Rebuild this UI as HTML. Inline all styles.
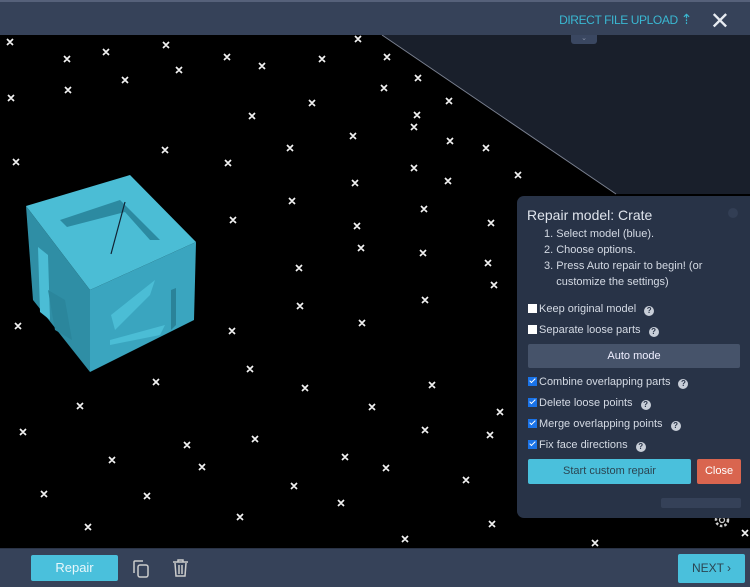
<!DOCTYPE html>
<html><head><meta charset="utf-8"><style>
*{margin:0;padding:0;box-sizing:border-box}
body{width:750px;height:587px;overflow:hidden;background:#000;font-family:"Liberation Sans",sans-serif;position:relative}
.hdr{position:absolute;left:0;top:0;width:750px;height:35px;background:#364259;border-top:2px solid #56617a}
.up{position:absolute;right:58px;top:9px;color:#3ab8d2;font-size:12px;letter-spacing:-0.4px}
.x{position:absolute;right:20px;top:5px;color:#e8ecf2;font-size:24px;font-weight:300}
.tab{position:absolute;left:571px;top:35px;width:26px;height:9px;background:#3a4761;border-radius:0 0 3px 3px;color:#8893a8;font-size:7px;text-align:center;line-height:7px}
.bot{position:absolute;left:0;top:548px;width:750px;height:39px;background:#364259;border-top:1px solid #2a3346}
.btn{position:absolute;background:#4ac0dc;color:#e8f7fb;font-size:13px;text-align:center;border-radius:2px}
.panel{position:absolute;left:517px;top:196px;width:240px;height:322px;background:#283347;border-radius:7px;color:#d4dae4;font-size:11px}
.panel h3{position:absolute;left:10px;top:11px;font-size:14px;font-weight:normal;color:#dfe4ec}
.ol{position:absolute;left:27px;top:30px;line-height:16px}
.cb{position:absolute;left:11px;font-size:11px}
.cb i{display:inline-block;width:9px;height:9px;background:#fff;margin-right:2px;vertical-align:-1px;position:relative}
.cb i.c{background:#1a73e8}
.cb i.c:after{content:"";position:absolute;left:2.5px;top:0px;width:2px;height:5px;border:solid #fff;border-width:0 1.5px 1.5px 0;transform:rotate(45deg)}
.q{display:inline-block;width:10px;height:10px;border-radius:50%;background:#c8ced8;color:#283347;font-size:8px;text-align:center;line-height:10px;font-weight:bold;margin-left:8px;vertical-align:-1px}
</style></head><body>
<svg width="750" height="587" style="position:absolute;left:0;top:0">
<polygon points="382,35 750,35 750,194 616,194" fill="#191f2b"/>
<line x1="382" y1="35" x2="616" y2="194" stroke="#7a8090" stroke-width="1"/>
<path stroke="#f2f2f2" stroke-width="1.7" d="
M7,39l6,6m0,-6l-6,6 M64,56l6,6m0,-6l-6,6 M103,49l6,6m0,-6l-6,6 M163,42l6,6m0,-6l-6,6 M224,54l6,6m0,-6l-6,6 M259,63l6,6m0,-6l-6,6 M319,56l6,6m0,-6l-6,6 M355,36l6,6m0,-6l-6,6 M384,54l6,6m0,-6l-6,6
M8,95l6,6m0,-6l-6,6 M65,87l6,6m0,-6l-6,6 M122,77l6,6m0,-6l-6,6 M176,67l6,6m0,-6l-6,6 M249,113l6,6m0,-6l-6,6 M309,100l6,6m0,-6l-6,6 M381,85l6,6m0,-6l-6,6 M415,75l6,6m0,-6l-6,6 M414,112l6,6m0,-6l-6,6 M446,98l6,6m0,-6l-6,6
M13,159l6,6m0,-6l-6,6 M162,147l6,6m0,-6l-6,6 M225,160l6,6m0,-6l-6,6 M287,145l6,6m0,-6l-6,6 M350,133l6,6m0,-6l-6,6 M411,124l6,6m0,-6l-6,6 M447,138l6,6m0,-6l-6,6 M483,145l6,6m0,-6l-6,6 M411,165l6,6m0,-6l-6,6 M445,178l6,6m0,-6l-6,6 M515,172l6,6m0,-6l-6,6
M352,180l6,6m0,-6l-6,6 M289,198l6,6m0,-6l-6,6 M230,217l6,6m0,-6l-6,6 M421,206l6,6m0,-6l-6,6 M354,223l6,6m0,-6l-6,6 M485,260l6,6m0,-6l-6,6 M488,220l6,6m0,-6l-6,6 M15,323l6,6m0,-6l-6,6 M229,328l6,6m0,-6l-6,6 M297,303l6,6m0,-6l-6,6 M359,320l6,6m0,-6l-6,6 M422,297l6,6m0,-6l-6,6 M491,282l6,6m0,-6l-6,6 M296,265l6,6m0,-6l-6,6 M420,250l6,6m0,-6l-6,6 M358,245l6,6m0,-6l-6,6
M77,403l6,6m0,-6l-6,6 M153,379l6,6m0,-6l-6,6 M247,366l6,6m0,-6l-6,6 M302,385l6,6m0,-6l-6,6 M369,404l6,6m0,-6l-6,6 M429,382l6,6m0,-6l-6,6 M497,409l6,6m0,-6l-6,6 M20,429l6,6m0,-6l-6,6 M109,457l6,6m0,-6l-6,6 M184,442l6,6m0,-6l-6,6 M252,436l6,6m0,-6l-6,6 M342,454l6,6m0,-6l-6,6 M422,427l6,6m0,-6l-6,6 M487,432l6,6m0,-6l-6,6 M41,491l6,6m0,-6l-6,6 M144,493l6,6m0,-6l-6,6 M199,464l6,6m0,-6l-6,6 M291,483l6,6m0,-6l-6,6 M383,465l6,6m0,-6l-6,6 M463,477l6,6m0,-6l-6,6 M85,524l6,6m0,-6l-6,6 M237,514l6,6m0,-6l-6,6 M338,500l6,6m0,-6l-6,6 M402,536l6,6m0,-6l-6,6 M489,521l6,6m0,-6l-6,6 M592,540l6,6m0,-6l-6,6 M742,530l6,6m0,-6l-6,6"/>
<!-- cube -->
<polygon points="26,206 130,175 196,242 90,290" fill="#4bbdd5"/>
<polygon points="26,206 90,290 90,372 33,300" fill="#2f8ea5"/>
<polygon points="90,290 196,242 194,320 90,372" fill="#3aa5bf"/>
<polygon points="60,220 120,200 160,240 150,240 125,212 67,227" fill="#2c8aa1"/>
<line x1="125" y1="202" x2="111" y2="254" stroke="#123" stroke-width="1.2"/>
<polygon points="38,247 48,255 50,320 40,312" fill="#4bbdd5"/>
<polygon points="48,290 65,300 72,340 55,330" fill="#2b869c"/>
<polygon points="111,315 155,280 150,295 115,330" fill="#4bbdd5"/>
<polygon points="110,340 165,325 160,335 110,345" fill="#4bbdd5"/>
<polygon points="171,290 176,288 176,325 171,330" fill="#2a8399"/>
<!-- gear -->
<circle cx="722" cy="520" r="6" fill="none" stroke="#ccc" stroke-width="2.5" stroke-dasharray="2.5 2"/>
<circle cx="722" cy="520" r="2.5" fill="none" stroke="#ccc" stroke-width="1.3"/>
</svg>
<div class="hdr"><div class="up">DIRECT FILE UPLOAD <span style="font-size:14px">⇡</span></div><div class="x">✕</div></div>
<div class="tab">⌄</div>
<div class="panel">
<div style="position:absolute;right:19px;top:12px;width:10px;height:10px;border-radius:50%;background:#323e54"></div>
<h3>Repair model: Crate</h3>
<div class="ol">1. Select model (blue).<br>2. Choose options.<br>3. Press Auto repair to begin! (or<br>&nbsp;&nbsp;&nbsp;&nbsp;customize the settings)</div>
<div class="cb" style="top:107px"><i></i>Keep original model<span class="q">?</span></div>
<div class="cb" style="top:128px"><i></i>Separate loose parts<span class="q">?</span></div>
<div style="position:absolute;left:11px;top:148px;width:212px;height:24px;background:#46536a;color:#eef;font-size:11px;text-align:center;line-height:24px;border-radius:2px">Auto mode</div>
<div class="cb" style="top:180px"><i class="c"></i>Combine overlapping parts<span class="q">?</span></div>
<div class="cb" style="top:201px"><i class="c"></i>Delete loose points<span class="q">?</span></div>
<div class="cb" style="top:222px"><i class="c"></i>Merge overlapping points<span class="q">?</span></div>
<div class="cb" style="top:243px"><i class="c"></i>Fix face directions<span class="q">?</span></div>
<div style="position:absolute;left:11px;top:263px;width:163px;height:25px;background:#4ac0dc;color:#2b4552;font-size:11px;text-align:center;line-height:25px;border-radius:2px">Start custom repair</div>
<div style="position:absolute;left:180px;top:263px;width:44px;height:25px;background:#d9654f;color:#fff;font-size:11px;text-align:center;line-height:25px;border-radius:2px">Close</div>
<div style="position:absolute;left:144px;top:302px;width:80px;height:10px;background:#354158;border-radius:2px"></div>
</div>
<div class="bot">
<div class="btn" style="left:31px;top:6px;width:87px;height:26px;line-height:26px">Repair</div>
<svg style="position:absolute;left:132px;top:10px" width="20" height="20"><path d="M2,14V3a1,1 0 0 1 1,-1h8" fill="none" stroke="#ccc" stroke-width="1.5"/><rect x="6" y="6" width="10" height="12" rx="2" fill="none" stroke="#ccc" stroke-width="1.5"/></svg>
<svg style="position:absolute;left:172px;top:9px" width="18" height="20"><path d="M1,4h15M6,4V2h5v2M3,5l1,13h9l1,-13M7,7v9M10,7v9" fill="none" stroke="#ccc" stroke-width="1.5"/></svg>
<div class="btn" style="left:678px;top:5px;width:67px;height:29px;line-height:29px;font-size:12px;color:#2b4552">NEXT ›</div>
</div>
</body></html>
